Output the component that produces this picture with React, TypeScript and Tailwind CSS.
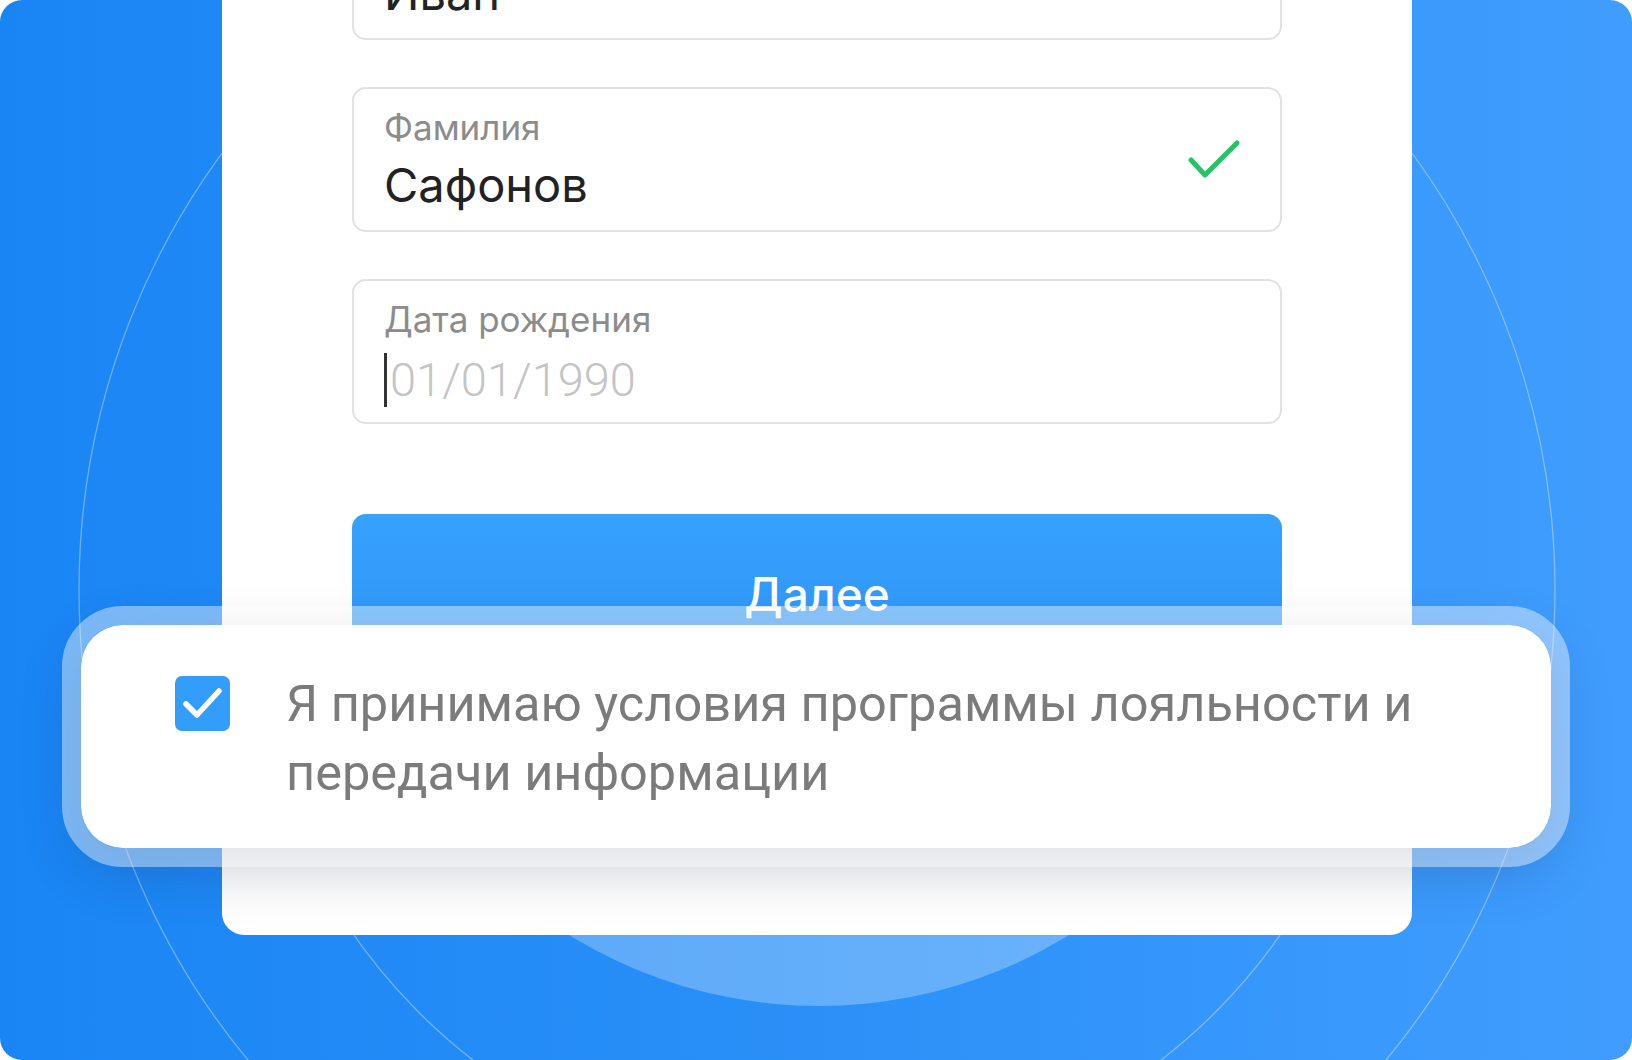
function Field({
  label,
  value,
  placeholder,
  valid,
  focused,
}: {
  label?: string;
  value?: string;
  placeholder?: string;
  valid?: boolean;
  focused?: boolean;
}) {
  return (
    <div className="relative flex h-[145px] w-[930px] flex-col rounded-[14px] border-2 border-[#e2e2e2] bg-white pl-[30px] pt-[16px]">
      <span className="h-[44px] font-['Inter'] text-[35px] leading-[44px] text-[#8c8c8c]">
        {label}
      </span>
      <div className="mt-[8px] flex h-[56px] items-center">
        {focused && <span className="mr-[3px] mt-[6px] h-[54px] w-[3px] bg-[#333]" />}
        {value ? (
          <span className="font-['Inter'] text-[47px] leading-[56px] text-[#222]">
            {value}
          </span>
        ) : (
          <span className="pt-[6px] font-['Roboto'] text-[47px] font-light leading-[56px] text-[#c4c4c4]">
            {placeholder}
          </span>
        )}
      </div>
      {valid && (
        <svg
          viewBox="0 0 56 44"
          className="absolute right-[38px] top-[50px] h-[44px] w-[56px]"
          fill="none"
          stroke="#26c267"
          strokeWidth="5"
          strokeLinecap="round"
          strokeLinejoin="round"
        >
          <path d="M5 21 L19 36 L51 4" />
        </svg>
      )}
    </div>
  );
}

export default function App() {
  return (
    <div className="relative h-[1060px] w-[1632px] overflow-hidden rounded-[22px] bg-gradient-to-r from-[#1985f4] via-[#2a90f8] to-[#409dfe]">
      {/* background rings */}
      <svg
        className="absolute inset-0"
        width="1632"
        height="1060"
        viewBox="0 0 1632 1060"
        fill="none"
      >
        <circle cx="819" cy="530" r="476" fill="white" fillOpacity="0.27" />
        <circle cx="817" cy="590" r="738" stroke="white" strokeOpacity="0.35" strokeWidth="1.3" />
        <circle cx="817" cy="613" r="564" stroke="white" strokeOpacity="0.35" strokeWidth="1.3" />
      </svg>

      {/* form sheet */}
      <div className="relative ml-[222px] mt-[-125px] flex h-[1060px] w-[1190px] flex-col items-center rounded-b-[22px] bg-white pt-[20px]">
        <div className="flex flex-col gap-[47px]">
          <Field label="Имя" value="Иван" />
          <Field label="Фамилия" value="Сафонов" valid />
          <Field label="Дата рождения" placeholder="01/01/1990" focused />
        </div>
        <button className="mt-[90px] flex h-[160px] w-[930px] items-start justify-center rounded-[14px] bg-gradient-to-b from-[#37a1fe] to-[#2e95f5] pt-[52px] font-['Inter'] text-[46px] font-medium leading-[56px] text-white">
          Далее
        </button>
      </div>

      {/* consent popup */}
      <div className="absolute left-[81px] top-[625px] flex h-[223px] w-[1470px] items-start gap-[56px] rounded-[42px] bg-white pl-[94px] pt-[51px] shadow-[0_18px_60px_rgba(20,30,60,0.24)] [outline:19px_solid_rgba(255,255,255,0.42)]">
        <div className="flex h-[55px] w-[55px] shrink-0 items-center justify-center rounded-[7px] bg-[#339dfc]">
          <svg
            viewBox="0 0 55 55"
            className="h-[55px] w-[55px]"
            fill="none"
            stroke="white"
            strokeWidth="5.5"
            strokeLinecap="round"
            strokeLinejoin="round"
          >
            <path d="M11 28 L22 39 L44 15" />
          </svg>
        </div>
        <p className="mt-[-7px] w-[1160px] font-['Roboto'] text-[50.5px] leading-[69px] text-[#7b7b7b]">
          Я принимаю условия программы лояльности и передачи информации
        </p>
      </div>
    </div>
  );
}
